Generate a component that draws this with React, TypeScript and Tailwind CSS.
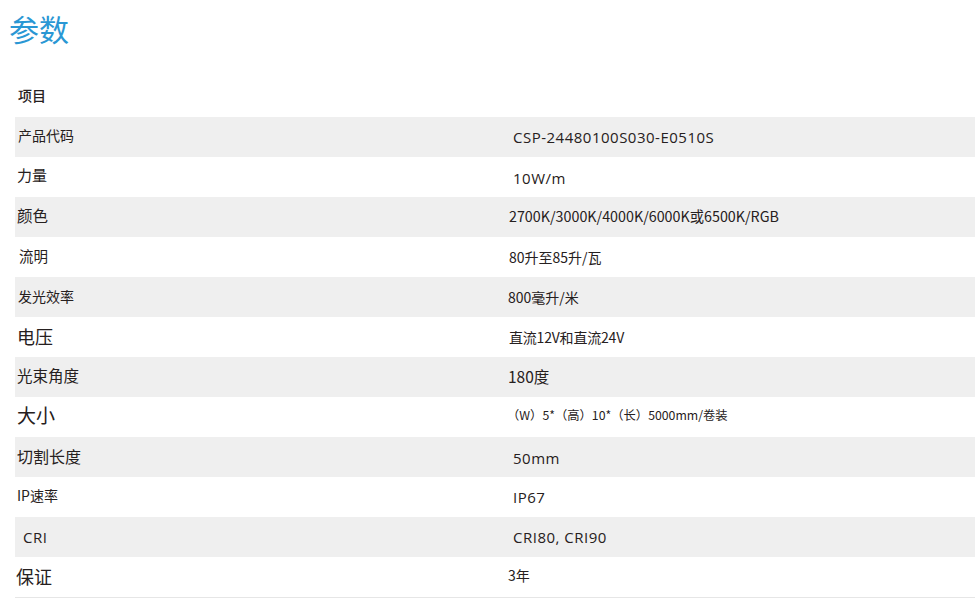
const rows: { label: string; value: string; lc: string; vc: string; gray: boolean }[] = [
  { label: "项目", value: "", lc: "text-[14px] font-medium pl-[3px] pb-[3px]", vc: "", gray: false },
  { label: "产品代码", value: "CSP-24480100S030-E0510S", lc: "text-[14px] pl-[3px] pb-[4px]", vc: "font-['Open_Sans'] text-[15px] tracking-[0.5px] pl-[18px]", gray: true },
  { label: "力量", value: "10W/m", lc: "text-[15px] pl-[2px] pb-[3px]", vc: "font-['Open_Sans'] text-[15px] tracking-[0.5px] pl-[18px] pt-[2px]", gray: false },
  { label: "颜色", value: "2700K/3000K/4000K/6000K或6500K/RGB", lc: "text-[15.5px] pl-[2px] pb-[3px]", vc: "text-[14.3px] pl-[14px] pb-[2px]", gray: true },
  { label: "流明", value: "80升至85升/瓦", lc: "text-[14.5px] pl-[4px] pb-[2px]", vc: "text-[14px] pl-[14px]", gray: false },
  { label: "发光效率", value: "800毫升/米", lc: "text-[14px] pl-[3px] pb-[2px]", vc: "text-[14px] pl-[13px]", gray: true },
  { label: "电压", value: "直流12V和直流24V", lc: "text-[18px] pl-[2px] pb-[2px]", vc: "text-[14px] pl-[14px] tracking-[-0.2px]", gray: false },
  { label: "光束角度", value: "180度", lc: "text-[15.5px] pl-[2px] pb-[2px]", vc: "text-[15.5px] pl-[13px]", gray: true },
  { label: "大小", value: "（W）5*（高）10*（长）5000mm/卷装", lc: "text-[19px] pl-[2px] pb-[3px]", vc: "text-[12.3px] pl-[12px] pb-[4px]", gray: false },
  { label: "切割长度", value: "50mm", lc: "text-[16px] pl-[2px] pb-[3px]", vc: "font-['Open_Sans'] text-[15px] tracking-[0.5px] pl-[18px] pt-[2px]", gray: true },
  { label: "IP速率", value: "IP67", lc: "text-[14px] pl-[2px] pb-[3px]", vc: "font-['Open_Sans'] text-[15px] tracking-[0.5px] pl-[18px]", gray: false },
  { label: "CRI", value: "CRI80, CRI90", lc: "font-['Open_Sans'] text-[15px] tracking-[0.5px] pl-[8px]", vc: "font-['Open_Sans'] text-[15px] tracking-[0.5px] pl-[18px]", gray: true },
  { label: "保证", value: "3年", lc: "text-[18px] pl-[1px] pb-[2px]", vc: "text-[14px] pl-[13px] pb-[4px]", gray: false },
];

const App: React.FC = () => {
  return (
    <div className="w-[975px] h-[610px] bg-white text-[#262020] font-['Noto_Sans_CJK_SC',sans-serif]">
      <h1 className="pl-[9px] pt-[8px] h-[77px] text-[30px] leading-[40px] text-[#2a97d4] font-['Noto_Sans_CJK_SC',sans-serif]">
        参数
      </h1>

      <div className="ml-[15px] border-b border-[#e6e6e6]">
        {rows.map((r) => (
          <div key={r.label} className={`flex h-10 items-center ${r.gray ? "bg-[#efefef]" : "bg-white"}`}>
            <div className={`w-[480px] shrink-0 font-['Noto_Sans_CJK_SC',sans-serif] ${r.lc}`}>{r.label}</div>
            <div className={`flex-1 font-['Noto_Sans_CJK_SC',sans-serif] ${r.vc}`}>{r.value}</div>
          </div>
        ))}
      </div>
    </div>
  );
};

export default App;
